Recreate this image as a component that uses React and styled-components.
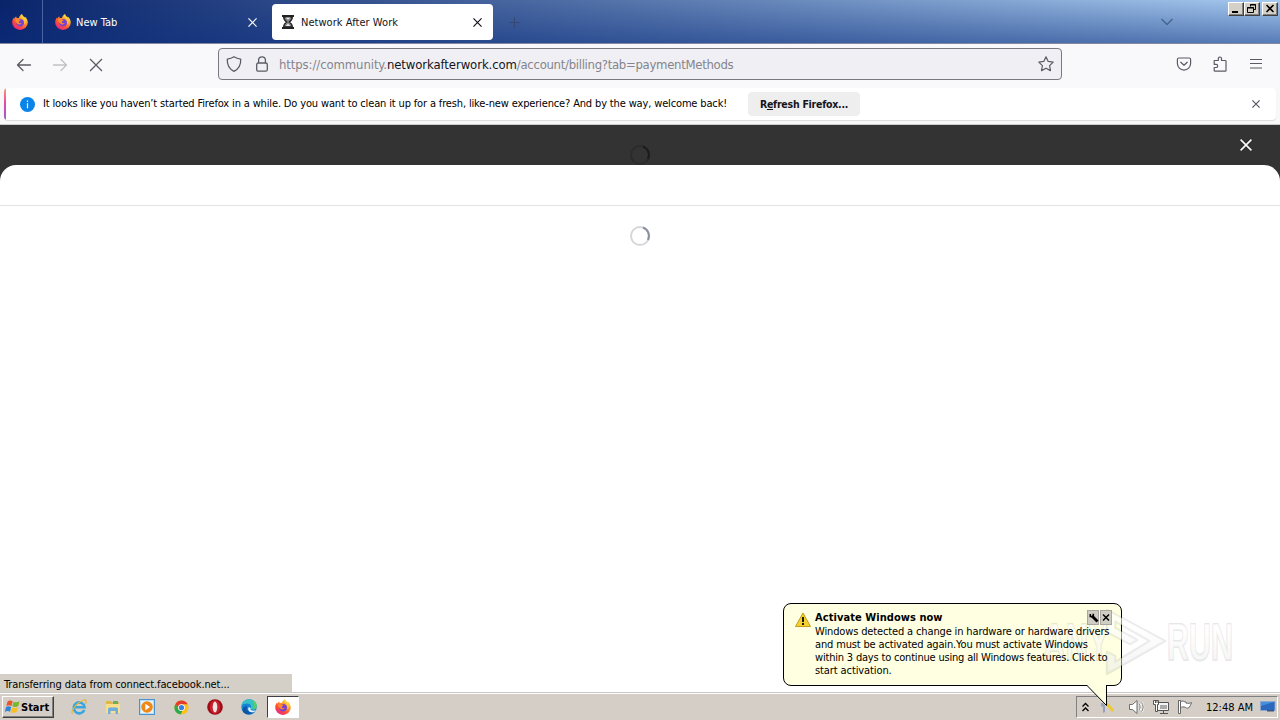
import React from 'react';
import styled, { createGlobalStyle } from 'styled-components';

const GlobalStyle = createGlobalStyle`
  body {
    margin: 0;
    overflow: hidden;
    background: #fff;
  }

  * {
    box-sizing: border-box;
  }
`;

const Desktop = styled.div`
  position: relative;
  display: flex;
  flex-direction: column;
  width: 1280px;
  height: 720px;
  font-family: 'DejaVu Sans Condensed', 'DejaVu Sans', sans-serif;
  font-stretch: condensed;
  font-size: 11px;
  line-height: 13px;
  color: #000;
  white-space: nowrap;
`;

const Icon = styled.svg`
  display: block;
  flex: none;
  overflow: visible;
`;

const Label = styled.span`
  letter-spacing: ${p => p.$spacing || 0}px;
`;

/* ---- title bar ---- */

const TitleBar = styled.div`
  display: flex;
  height: 44px;
  border-bottom: 1px solid #8389a0;
  background: linear-gradient(rgba(10, 46, 126, 0) 0, rgba(10, 46, 126, 0.5) 100%),
    linear-gradient(90deg, #0a246a 0, #a6caf0 100%);
`;

const PinnedTab = styled.div`
  width: 43px;
  padding: 14px 0 0 12px;
  border-right: 1px solid #4c64a2;
`;

const Tab = styled.div`
  display: flex;
  align-items: center;
  width: 221px;
  height: 36px;
  margin: 4px 0 0 4px;
  padding: 0 11px 0 ${p => (p.$active ? 10 : 8)}px;
  border-radius: 4px;
  color: ${p => (p.$active ? '#15141a' : '#fff')};
  background: ${p => (p.$active ? '#fff' : 'transparent')};
`;

const TabTitle = styled(Label)`
  flex: 1;
  padding-left: ${p => (p.$active ? 7 : 5)}px;
  padding-top: 1px;
`;

const NewTab = styled.div`
  padding: 17px 0 0 16px;
`;

const TitleEnd = styled.div`
  display: flex;
  align-items: flex-start;
  margin-left: auto;
`;

const ListTabs = styled.div`
  padding: 18px 55px 0 0;
`;

const WindowButton = styled.div`
  width: 16px;
  height: 14px;
  margin-top: 2px;
  margin-right: ${p => p.$gap || 0}px;
  border: 1px solid;
  border-color: #fff #404040 #404040 #fff;
  background: #d4d0c8;
  box-shadow: inset -1px -1px #808080;
`;

/* ---- navigation ---- */

const NavBar = styled.div`
  display: flex;
  align-items: center;
  height: 44px;
  padding: 0 16px 4px;
  background: #f9f9fb;
  color: #5b5b66;
`;

const NavButtons = styled.div`
  display: flex;
  gap: 20px;
  width: 202px;
  padding-top: 1px;
`;

const UrlBar = styled.div`
  display: flex;
  align-items: center;
  width: 844px;
  height: 32px;
  padding: 0 7px;
  border: 1px solid #7a7982;
  border-radius: 4px;
  background: #f0f0f4;
`;

const LockSlot = styled.div`
  padding: 0 11px 0 14px;
`;

const Url = styled.div`
  flex: 1;
  padding-top: 1px;
  font-size: 13px;
  line-height: 16px;
  letter-spacing: -0.1px;
  color: #85848c;

  b {
    font-weight: 400;
    color: #15141a;
  }
`;

const NavTools = styled.div`
  display: flex;
  gap: 20px;
  margin-left: auto;
`;

/* ---- notification ---- */

const NoticeArea = styled.div`
  height: 37px;
  padding: 0 4px;
  border-bottom: 1px solid #cccccf;
  background: #f8f8f9;
`;

const Notice = styled.div`
  position: relative;
  display: flex;
  align-items: center;
  height: 32px;
  padding: 0 16px;
  overflow: hidden;
  border-radius: 4px;
  background: #fff;
  box-shadow: 0 1px 1px rgba(0, 0, 0, 0.12);

  &::before {
    content: '';
    position: absolute;
    left: 0;
    top: 0;
    width: 2px;
    height: 32px;
    background: linear-gradient(#ff9a6c, #e84aa5 45%, #9059d8);
  }
`;

const NoticeText = styled(Label)`
  flex: none;
  width: 713px;
  padding: 0 0 1px 8px;
`;

const RefreshButton = styled.div`
  width: 112px;
  height: 24px;
  border-radius: 4px;
  background: #eeeeef;
  color: #15141a;
  font-size: 10.5px;
  font-weight: 700;
  line-height: 25px;
  text-align: center;
  letter-spacing: -0.25px;
`;

const Push = styled.div`
  margin-left: auto;
`;

/* ---- page ---- */

const Page = styled.div`
  position: relative;
  flex: 1;
  background: #333;
`;

const Backdrop = styled.div`
  display: flex;
  height: 40px;
  justify-content: center;
  padding-top: 20px;
  overflow: hidden;
`;

const CloseSheet = styled.div`
  position: absolute;
  top: 14px;
  right: 28px;
`;

const Sheet = styled.div`
  height: 527px;
  border-radius: 16px 16px 0 0;
  background: #fff;
`;

const SheetHeader = styled.div`
  height: 41px;
  border-bottom: 1px solid #e3e3e6;
`;

const SheetBody = styled.div`
  display: flex;
  justify-content: center;
  padding-top: 20px;
`;

const StatusPanel = styled.div`
  position: absolute;
  left: 0;
  bottom: 0;
  width: 292px;
  height: 18px;
  padding: 4px 0 0 4px;
  background: #d4d0c8;
`;

/* ---- taskbar ---- */

const Taskbar = styled.div`
  display: flex;
  height: 28px;
  padding: 3px 2px 0;
  border-top: 1px solid #c9c7c3;
  background: #d5cec7;
  box-shadow: inset 0 1px #fff;
`;

const StartButton = styled.div`
  display: flex;
  align-items: center;
  width: 52px;
  height: 22px;
  margin-right: 9px;
  padding-left: 2px;
  border: 1px solid;
  border-color: #fff #404040 #404040 #fff;
  box-shadow: inset -1px -1px #808080;
  font-weight: 700;
`;

const TaskButton = styled.div`
  display: flex;
  align-items: center;
  justify-content: center;
  width: 32px;
  height: 22px;
  margin-right: 2px;
  border: 1px solid ${p => (p.$active ? '#fff' : 'transparent')};
  ${p => p.$active && 'border-top-color: #404040; border-left-color: #404040; background: #fff;'}
`;

const Tray = styled.div`
  display: flex;
  align-items: center;
  width: 202px;
  height: 22px;
  margin-left: auto;
  padding-left: 5px;
  border: 1px solid;
  border-color: #808080 #fff #fff #808080;
`;

const TrayItem = styled.div`
  width: ${p => p.$width}px;
`;

/* ---- balloon ---- */

const Balloon = styled.div`
  position: absolute;
  left: 783px;
  top: 603px;
  display: flex;
  width: 339px;
  height: 83px;
  padding: 7px 0 0 11px;
  border: 1px solid #000;
  border-radius: 8px;
  background: #ffffe1;
`;

const BalloonText = styled.div`
  position: relative;
  z-index: 2;
  padding-left: 4px;
`;

const BalloonTitle = styled.div`
  font-weight: 700;
  line-height: 13px;
  letter-spacing: 0.06px;
  padding-bottom: 1px;
`;

const BalloonLine = styled.div`
  letter-spacing: ${p => p.$spacing}px;
`;

const BalloonTail = styled(Icon)`
  position: absolute;
  left: 303px;
  top: 80px;
`;

const BalloonActions = styled.div`
  position: absolute;
  z-index: 2;
  top: 6px;
  right: 9px;
  display: flex;
  gap: 1px;
`;

const BalloonAction = styled.div`
  width: 12px;
  height: 15px;
  padding: 2px 0 0 1px;
  border: 1px solid #a9a69e;
  background: #d0cdc5;
`;

const Watermark = styled(Icon)`
  position: absolute;
  z-index: 1;
  left: 1040px;
  top: 606px;
  font-family: 'Liberation Sans', sans-serif;
  font-size: 52px;
  font-weight: 700;
`;

const Cross = ({ size = 10, color = 'currentColor', weight = 1.2 }) => (
  <Icon width={size} height={size} viewBox="0 0 10 10" stroke={color} strokeWidth={(weight * 10) / size}>
    <path d="M.5.5l9 9M9.5.5l-9 9" />
  </Icon>
);

const FirefoxIcon = ({ size = 16 }) => (
  <Icon width={size} height={size} viewBox="0 0 16 16">
    <defs>
      <linearGradient id="fox" x1="0.85" y1="0.05" x2="0.2" y2="0.95">
        <stop offset="0" stopColor="#fff44f" />
        <stop offset="0.35" stopColor="#ff9a2e" />
        <stop offset="0.7" stopColor="#ff4a3c" />
        <stop offset="1" stopColor="#e5238a" />
      </linearGradient>
    </defs>
    <path
      fill="url(#fox)"
      d="M10 0c.2 1.7 1.6 2.4 2.6 3.6.2-.4.2-.8.1-1.2 2 1.500 3.100 3.800 3.100 6.200A7.800 7.400 0 0 1 .2 8.600C.2 6.500.9 4.700 2 3.500l.1 1.300C2.700 3.700 3.300 2.900 4.200 2.200c-.1.8.1 1.400.6 1.900h2.100C7.300 2.200 8.400.8 10 0z"
    />
    <path fill="#7542d6" d="M8 4.900c2.300 0 4 1.700 4 3.800s-1.700 3.700-3.900 3.700S4.300 10.800 4.300 8.900c0-.8.300-1.600.8-2.200z" />
    <path fill="#ff8b25" d="M3.300 5.500c1.300-1 2.500-.7 3.300.2h2c-.2 1.200-1.700 1.400-1.900 2.300.2 1.200 1.500 1.500 2.900.9-.7 1.500-2.700 2-4 .9-1.500-1-2.500-2.300-2.300-4.300z" />
    <path fill="#ffd23e" d="M10 .2c-1 1.500-.7 2.800.6 3.900 2.200 1.700 2.300 4.600 1.500 6.500 1.800-1.600 2.200-4.300.9-6.300C12.100 2.900 10.200 2.400 10 .2z" />
  </Icon>
);

const HourglassIcon = () => (
  <Icon width="12" height="16" viewBox="0 0 12 16">
    <path fill="#222" d="M0 1h12v2H0zM0 13h12v2H0z" />
    <path fill="#888" stroke="#222" strokeWidth="1.300" d="M1.700 3h8.600c0 2.500-1.100 3.800-3 5 1.900 1.200 3 2.500 3 5H1.700c0-2.500 1.100-3.800 3-5-1.900-1.200-3-2.500-3-5z" />
    <path fill="#eee" d="M3.500 3.500h5L6 5.500zM6 9.500l2 2.500H4z" />
  </Icon>
);

const ArrowIcon = ({ flip, color }) => (
  <Icon width="16" height="16" viewBox="0 0 16 16" fill="none" stroke={color} strokeWidth="1.300" strokeLinecap="round" strokeLinejoin="round">
    <path d={flip ? 'M1.500 8h13M9 2.500L14.500 8 9 13.500' : 'M14.500 8h-13M7 2.500L1.500 8 7 13.500'} />
  </Icon>
);

const ShieldIcon = () => (
  <Icon width="16" height="16" viewBox="0 0 16 16" fill="none" stroke="currentColor" strokeWidth="1.300" strokeLinejoin="round">
    <path d="M8 .8c2 1.300 4.300 2 6.700 2.300.3 5-1.700 9.700-6.700 12.200C3 12.800 1 8.100 1.300 3.100 3.700 2.800 6 2.100 8 .8z" />
  </Icon>
);

const LockIcon = () => (
  <Icon width="12" height="16" viewBox="0 0 12 16" fill="none" stroke="currentColor" strokeWidth="1.300">
    <rect x=".7" y="7" width="10.600" height="8.200" rx="1.500" />
    <path d="M2.600 7V4.300a3.400 3.400 0 0 1 6.800 0V7" />
  </Icon>
);

const StarIcon = () => (
  <Icon width="16" height="16" viewBox="0 0 16 16" fill="none" stroke="currentColor" strokeWidth="1.200" strokeLinejoin="round">
    <path d="M8 .8l2.200 4.600 5 .7-3.600 3.500.9 5L8 12.200l-4.500 2.400.9-5L.8 6.100l5-.7z" />
  </Icon>
);

const PocketIcon = () => (
  <Icon width="16" height="16" viewBox="0 0 16 16" fill="none" stroke="currentColor" strokeWidth="1.200" strokeLinejoin="round" strokeLinecap="round">
    <path d="M2.800 2h10.400c.8 0 1.400.6 1.400 1.400v4.100a6.600 6.600 0 0 1-13.200 0V3.400C1.400 2.600 2 2 2.800 2z" />
    <path d="M4.800 6.200L8 9.200l3.200-3" />
  </Icon>
);

const PuzzleIcon = () => (
  <Icon width="16" height="16" viewBox="0 0 16 16" fill="none" stroke="currentColor" strokeWidth="1.200" strokeLinejoin="round">
    <path d="M2.200 4.500h4.100V2.600a1.600 1.600 0 0 1 3.200 0v1.900h3.800c.4 0 .7.300.7.700v9.200c0 .4-.3.700-.7.700H2.900c-.4 0-.7-.3-.7-.7v-2.900h1.900a1.600 1.600 0 0 0 0-3.200H2.200z" />
  </Icon>
);

const MenuIcon = () => (
  <Icon width="16" height="16" viewBox="0 0 16 16" stroke="currentColor" strokeWidth="1.200">
    <path d="M2 3.500h12M2 7.500h12M2 12h12" />
  </Icon>
);

const InfoIcon = () => (
  <Icon width="15" height="15" viewBox="0 0 15 15">
    <circle cx="7.500" cy="7.500" r="7.500" fill="#0a84e8" />
    <path stroke="#fff" strokeWidth="1.200" d="M7.500 6.300v5M7.500 3.600v1.300" />
  </Icon>
);

const Spinner = ({ track, head }) => (
  <Icon width="20" height="20" viewBox="0 0 20 20" fill="none" strokeWidth="2">
    <circle cx="10" cy="10" r="9" stroke={track} />
    <path d="M13 1.500A9 9 0 0 1 18 14" stroke={head} />
  </Icon>
);

const WindowsIcon = () => (
  <Icon width="16" height="16" viewBox="0 0 16 16">
    <path fill="#e8562a" d="M2.500 2.500C4.500 1 6 1.300 7.700 2.300L6.500 7C4.700 6 3.200 6 1.300 7z" />
    <path fill="#77b82a" d="M8.600 2.700c2 1 3.800.8 6-.4L13.300 7c-2 1.200-4 1.200-5.900.3z" />
    <path fill="#2f86d6" d="M1 8c2-1 3.500-.8 5.200 0L5 12.800c-1.800-1-3.300-.9-5.200.1z" />
    <path fill="#f8be22" d="M7.100 8.400c2 1 3.900.9 5.900-.4l-1.300 4.800c-2 1.200-3.900 1.200-5.900.4z" />
  </Icon>
);

const IeIcon = () => (
  <Icon width="16" height="16" viewBox="0 0 16 16" fill="none">
    <path d="M13.300 11A5.500 5.500 0 1 1 13.700 8.300H4" stroke="#3aa6e0" strokeWidth="2.600" />
    <path d="M1.500 15c-3-1.500 5-12.500 11.500-14 2.500-.4 2.500 1.500 1.500 3.800" stroke="#e9b52c" strokeWidth="1.200" />
  </Icon>
);

const FolderIcon = () => (
  <Icon width="16" height="16" viewBox="0 0 16 16">
    <path fill="#e3b64c" d="M1 2h5l1 1.500h7V13H1z" />
    <path fill="#6cae5b" d="M8 2h5v3H8z" />
    <path fill="#f8df8c" d="M1 5h14v9H1z" />
    <path fill="#6faede" d="M3 10c0-1 1-1.500 2-1.500h6c1 0 2 .5 2 1.500v5h-2.500v-3h-5v3H3z" />
  </Icon>
);

const PlayerIcon = () => (
  <Icon width="16" height="16" viewBox="0 0 16 16">
    <rect x=".5" y=".5" width="15" height="15" fill="#b9ddf5" stroke="#4a93ce" />
    <rect x="2" y="2" width="12" height="12" fill="#e9f5fc" />
    <circle cx="8" cy="8" r="5.800" fill="#f08818" />
    <path fill="#fff" d="M6.300 4.800L11 8l-4.700 3.200z" />
  </Icon>
);

const ChromeIcon = () => (
  <Icon width="15" height="15" viewBox="0 0 16 16">
    <circle cx="8" cy="8" r="7.500" fill="#fbc116" />
    <path fill="#e33b2e" d="M1.500 4.200A7.500 7.500 0 0 1 14.500 4.400H8a3.600 3.600 0 0 0-3.200 5.200z" />
    <path fill="#2da94f" d="M1.500 4.200L4.800 9.800A3.600 3.600 0 0 0 9 11.500l-2 4A7.500 7.500 0 0 1 1.500 4.200z" />
    <circle cx="8" cy="8" r="3.600" fill="#fff" />
    <circle cx="8" cy="8" r="2.800" fill="#3b7de9" />
  </Icon>
);

const OperaIcon = () => (
  <Icon width="16" height="16" viewBox="0 0 16 16">
    <circle cx="8" cy="8" r="7.800" fill="#9c0d18" />
    <ellipse cx="8" cy="8" rx="5.200" ry="6.800" fill="#c9202b" />
    <ellipse cx="8" cy="8" rx="2.300" ry="5.400" fill="#f2e4e2" />
  </Icon>
);

const EdgeIcon = () => (
  <Icon width="16" height="16" viewBox="0 0 16 16">
    <circle cx="8" cy="8" r="7.700" fill="#1583d3" />
    <path fill="#35c0c9" d="M.6 6.500C1.500 2.500 4.600.3 8 .3c4.500 0 7.700 3 7.700 6.500 0 2.400-1.800 3.800-4 3.800-2 0-2.500-.8-2-1.700C11 6.500 8.500 4.600 6 4.600 3.500 4.600 1.500 5.500.6 6.500z" />
    <path fill="#59cf62" d="M11 1c3 1 4.700 3.300 4.700 5.800 0 2.400-1.800 3.800-4 3.800 2.200-3 1.800-6.600-.7-9.600z" />
    <path fill="#0d55a5" d="M6 7c-1.500 3.500 1.500 7.300 6.500 6.500C8 17 1.500 15 1.500 10.500 1.800 8.500 4 7 6 7z" />
    <path fill="#e8f3fb" d="M9.500 9c-.8 2 2 3.500 5.300 2.300-1 1.500-2.500 2.200-4 2-3-.3-4.300-2.800-3.300-4.800.7-.6 1.600-.3 2 .5z" />
  </Icon>
);

const SpeakerIcon = () => (
  <Icon width="16" height="16" viewBox="0 0 16 16" fill="none" stroke="#6d6d6d">
    <path fill="#fff" d="M.5 5.500h3L8 1.500v13l-4.500-4h-3z" />
    <path d="M10.300 5.200c1 1.500 1 4 0 5.600M12.600 3.500c2 2.500 2 6.500 0 9" stroke="#fff" strokeWidth="2.400" />
    <path d="M10.300 5.200c1 1.500 1 4 0 5.600M12.600 3.500c2 2.500 2 6.500 0 9" />
  </Icon>
);

const NetworkIcon = () => (
  <Icon width="16" height="16" viewBox="0 0 16 16">
    <path fill="#f4f4f4" stroke="#555" d="M4.500 3.500h11v8h-11z" />
    <path fill="#aaa" d="M7 6h7v4H7z" />
    <path stroke="#555" d="M7 14.500h8M10.500 12v2" />
    <path fill="#fff" stroke="#555" d="M.5 1.500h5v4h-1v7h-2v-7h-2z" />
    <path stroke="#555" d="M2.500 1v3M4 1v3" />
  </Icon>
);

const FlagIcon = () => (
  <Icon width="16" height="16" viewBox="0 0 16 16">
    <path fill="#fff" stroke="#666" d="M1.500 1.500h2v13h-2z" />
    <path fill="#fff" stroke="#666" d="M3.500 2.500c2-1.200 4 .4 5.500.6v1c2 .4 4 .2 5.500-.6-.8 2.500-1.500 4-3 5.500-1.500.3-2.500 0-3-.6-2-.8-3.500-.6-5 .3z" />
  </Icon>
);

const KeysIcon = () => (
  <Icon width="14" height="16" viewBox="0 0 14 16">
    <path fill="#9aa0bb" d="M1 4h3l2 2-1 1v6l-2 1V8L1 7z" />
    <path fill="#eec92e" d="M6 3l3 2 5 6-2 2-6-7z" />
  </Icon>
);

const DesktopIcon = () => (
  <Icon width="16" height="14" viewBox="0 0 16 14">
    <path fill="#2c68bd" stroke="#8ba7cf" d="M.5 1.500h14.500v9H.5z" />
    <path fill="#4590dd" d="M1 2h13L1 6z" />
    <path fill="#38547c" d="M7 10h7v1.500H7z" />
  </Icon>
);

const WarningIcon = () => (
  <Icon width="16" height="17" viewBox="0 0 16 17">
    <path fill="#f5d033" stroke="#c59b18" strokeLinejoin="round" d="M8 2l7.500 13.500H.5z" />
    <path stroke="#1c1c00" strokeWidth="2" d="M8 6v5M8 12v2" />
  </Icon>
);

const PINNED = [IeIcon, FolderIcon, PlayerIcon, ChromeIcon, OperaIcon, EdgeIcon];

const App = () => (
  <Desktop>
    <GlobalStyle />

    <TitleBar>
      <PinnedTab>
        <FirefoxIcon />
      </PinnedTab>
      <Tab>
        <FirefoxIcon />
        <TabTitle>New Tab</TabTitle>
        <Cross size={9} />
      </Tab>
      <Tab $active>
        <HourglassIcon />
        <TabTitle $active $spacing={0.04}>
          Network After Work
        </TabTitle>
        <Cross size={9} />
      </Tab>
      <NewTab>
        <Icon width="11" height="11" viewBox="0 0 11 11" stroke="#37496f" strokeWidth="1.200">
          <path d="M5.500 0v11M0 5.500h11" />
        </Icon>
      </NewTab>
      <TitleEnd>
        <ListTabs>
          <Icon width="12" height="8" viewBox="0 0 12 8" fill="none" stroke="#486590" strokeWidth="1.500">
            <path d="M.5 1L6 6.500 11.500 1" />
          </Icon>
        </ListTabs>
        <WindowButton>
          <Icon width="14" height="12" viewBox="0 0 14 12">
            <path d="M3 8h6v2H3z" />
          </Icon>
        </WindowButton>
        <WindowButton $gap={2}>
          <Icon width="14" height="12" viewBox="0 0 14 12" fill="none" stroke="#000">
            <path d="M5.500 3.500v-2h5v5h-2M2.500 4.500h6v5h-6zM5 2h6M2 5h7" />
          </Icon>
        </WindowButton>
        <WindowButton $gap={2}>
          <Icon width="14" height="12" viewBox="0 0 14 12" stroke="#000" strokeWidth="1.600">
            <path d="M3.500 2l7 7M10.500 2l-7 7" />
          </Icon>
        </WindowButton>
      </TitleEnd>
    </TitleBar>

    <NavBar>
      <NavButtons>
        <ArrowIcon color="#5b5b66" />
        <ArrowIcon flip color="#c0c0c6" />
        <Icon width="16" height="16" viewBox="0 0 16 16" stroke="#5b5b66" strokeWidth="1.300">
          <path d="M2 2l12 12M14 2L2 14" />
        </Icon>
      </NavButtons>
      <UrlBar>
        <ShieldIcon />
        <LockSlot>
          <LockIcon />
        </LockSlot>
        <Url>
          https://community.<b>networkafterwork.com</b>
          <Label $spacing={-0.3}>/account/billing?tab=paymentMethods</Label>
        </Url>
        <StarIcon />
      </UrlBar>
      <NavTools>
        <PocketIcon />
        <PuzzleIcon />
        <MenuIcon />
      </NavTools>
    </NavBar>

    <NoticeArea>
      <Notice>
        <InfoIcon />
        <NoticeText $spacing={-0.148}>
          It looks like you haven’t started Firefox in a while. Do you want to clean it up for a fresh, like-new
          experience? And by the way, welcome back!
        </NoticeText>
        <RefreshButton>
          R<u>e</u>fresh Firefox...
        </RefreshButton>
        <Push>
          <Cross size={8} color="#5b5b66" />
        </Push>
      </Notice>
    </NoticeArea>

    <Page>
      <Backdrop>
        <Spinner track="#2b2b2b" head="#1b1c1f" />
      </Backdrop>
      <CloseSheet>
        <Cross size={12} color="#fff" weight={1.5} />
      </CloseSheet>
      <Sheet>
        <SheetHeader />
        <SheetBody>
          <Spinner track="#d6d7da" head="#8b90a0" />
        </SheetBody>
      </Sheet>
      <StatusPanel>
        <Label $spacing={-0.1}>Transferring data from connect.facebook.net...</Label>
      </StatusPanel>
    </Page>

    <Taskbar>
      <StartButton>
        <WindowsIcon />
        Start
      </StartButton>
      {PINNED.map((Glyph, i) => (
        <TaskButton key={i}>
          <Glyph />
        </TaskButton>
      ))}
      <TaskButton $active>
        <FirefoxIcon />
      </TaskButton>
      <Tray>
        <TrayItem $width={18}>
          <Icon width="7" height="9" viewBox="0 0 7 9" fill="none" stroke="#000" strokeWidth="1.300">
            <path d="M.5 3.500l3-3 3 3M.5 8l3-3 3 3" />
          </Icon>
        </TrayItem>
        <TrayItem $width={29}>
          <KeysIcon />
        </TrayItem>
        <TrayItem $width={24}>
          <SpeakerIcon />
        </TrayItem>
        <TrayItem $width={24}>
          <NetworkIcon />
        </TrayItem>
        <TrayItem $width={29}>
          <FlagIcon />
        </TrayItem>
        <TrayItem $width={54}>
          <Label>12:48 AM</Label>
        </TrayItem>
        <DesktopIcon />
      </Tray>
    </Taskbar>

    <Balloon>
      <WarningIcon />
      <BalloonText>
        <BalloonTitle>Activate Windows now</BalloonTitle>
        <BalloonLine $spacing={-0.14}>Windows detected a change in hardware or hardware drivers</BalloonLine>
        <BalloonLine $spacing={-0.155}>and must be activated again.You must activate Windows</BalloonLine>
        <BalloonLine $spacing={-0.19}>within 3 days to continue using all Windows features. Click to</BalloonLine>
        <BalloonLine $spacing={-0.1}>start activation.</BalloonLine>
      </BalloonText>
      <BalloonActions>
        <BalloonAction>
          <Icon width="9" height="9" viewBox="0 0 9 9" fill="none" stroke="#000">
            <path d="M1.300 1v2.500h3V.8" strokeWidth="1.600" />
            <path d="M3 3l5.500 5.500" strokeWidth="2.800" />
          </Icon>
        </BalloonAction>
        <BalloonAction>
          <Icon width="9" height="9" viewBox="0 0 9 9" stroke="#000" strokeWidth="1.500">
            <path d="M1 1.500l6 6M7 1.500l-6 6" />
          </Icon>
        </BalloonAction>
      </BalloonActions>
      <BalloonTail width="24" height="24" viewBox="0 0 24 24">
        <path fill="#ffffe1" d="M0 1h19v21z" />
        <path fill="none" stroke="#000" d="M0 1.500l19.500 20V1.500" />
      </BalloonTail>
    </Balloon>

    <Watermark width="196" height="70" viewBox="0 0 196 70">
      <defs>
        <linearGradient id="mark" x1="0" y1="0" x2="0" y2="1">
          <stop offset="0.3" stopColor="#fff" stopOpacity="0.6" />
          <stop offset="1" stopColor="#e8e8e8" stopOpacity="0.5" />
        </linearGradient>
      </defs>
      <g fill="url(#mark)" stroke="#000" strokeOpacity="0.09" strokeWidth="2.500" strokeLinejoin="round" paintOrder="stroke">
        <text x="3" y="54" textLength="66" lengthAdjust="spacingAndGlyphs">
          ANY
        </text>
        <path
          fillRule="evenodd"
          d="M67 4l58 31-58 33V46l8 4v6l35-21-35-20v7l22 12-7 4-23-12z"
        />
        <text x="127" y="54" textLength="66" lengthAdjust="spacingAndGlyphs">
          RUN
        </text>
      </g>
    </Watermark>
  </Desktop>
);

export default App;
